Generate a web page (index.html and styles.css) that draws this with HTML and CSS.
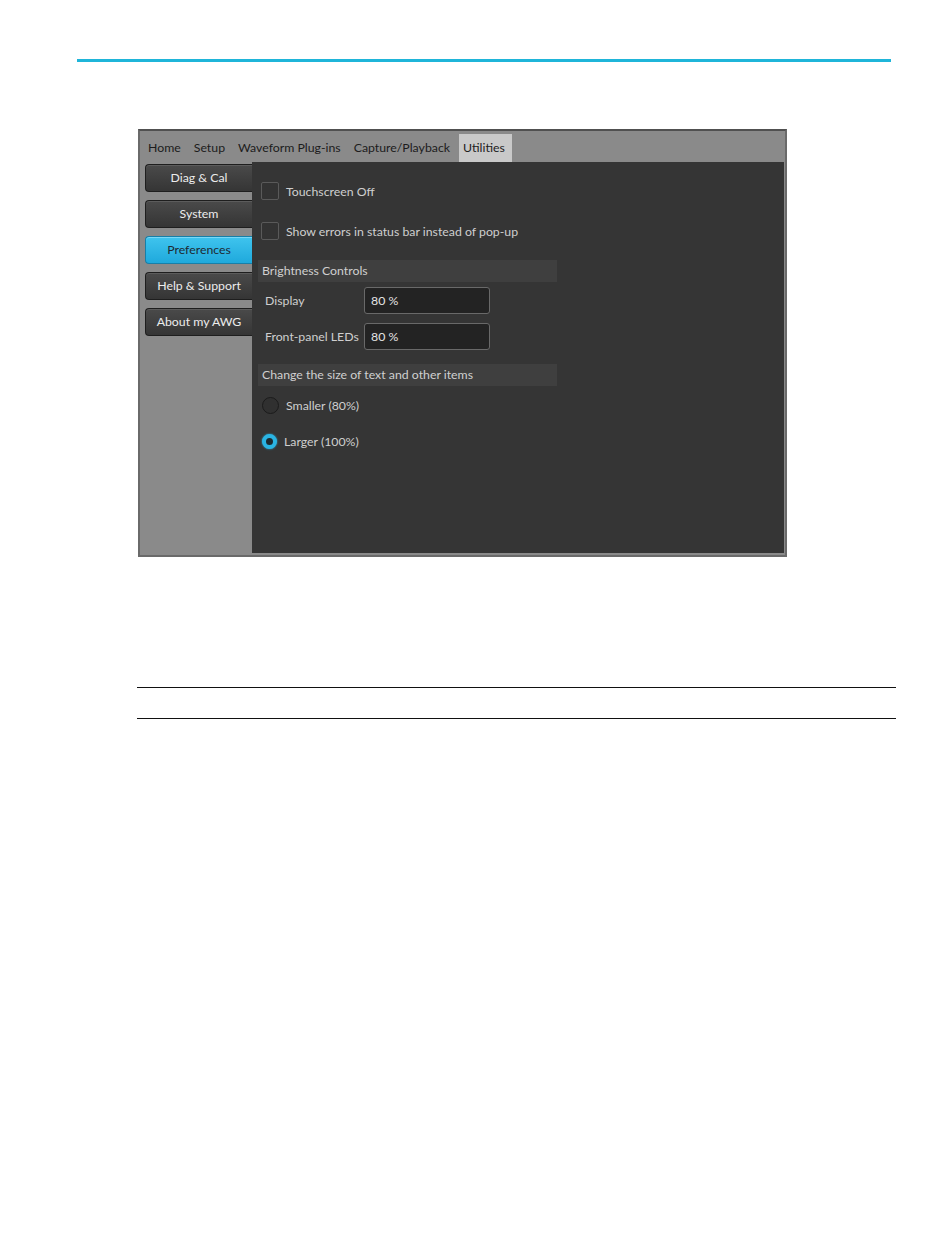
FILE: index.html
```html
<!DOCTYPE html>
<html lang="en">
<head>
    <meta charset="UTF-8">
    <title>Utilities - Preferences</title>
    <link rel="stylesheet" href="styles.css">
</head>
<body>

<div class="top-rule"></div>

<!-- Screenshot of the instrument UI -->
<div class="screen">
    <div class="tabbar">
        <span class="tab">Home</span>
        <span class="tab">Setup</span>
        <span class="tab">Waveform Plug-ins</span>
        <span class="tab">Capture/Playback</span>
        <span class="tab active">Utilities</span>
    </div>

    <div class="screen-body">
        <div class="sidebar">
            <div class="side-btn">Diag &amp; Cal</div>
            <div class="side-btn">System</div>
            <div class="side-btn selected">Preferences</div>
            <div class="side-btn">Help &amp; Support</div>
            <div class="side-btn">About my AWG</div>
        </div>

        <div class="content">
            <div class="check-row first">
                <span class="checkbox"></span>
                <span>Touchscreen Off</span>
            </div>
            <div class="check-row">
                <span class="checkbox"></span>
                <span>Show errors in status bar instead of pop-up</span>
            </div>

            <div class="group-title">Brightness Controls</div>
            <div class="field-row">
                <span class="field-label">Display</span>
                <span class="field-input">80 %</span>
            </div>
            <div class="field-row">
                <span class="field-label">Front-panel LEDs</span>
                <span class="field-input">80 %</span>
            </div>

            <div class="group-title second">Change the size of text and other items</div>
            <div class="radio-row first">
                <span class="radio"></span>
                <span>Smaller (80%)</span>
            </div>
            <div class="radio-row">
                <span class="radio on"></span>
                <span>Larger (100%)</span>
            </div>
        </div>
    </div>
</div>

<!-- Empty table rule (note box) -->
<div class="note-rule"></div>
<div class="note-rule bottom"></div>

</body>
</html>
```

FILE: styles.css
```css
/* General */
body {
    margin: 0;
    background-color: #fff;
    font-family: Lato, "Open Sans", sans-serif;
}

.top-rule {
    margin: 59px 0 0 77px;
    width: 814px;
    height: 3px;
    background-color: #1fb5d9;
}

/* Screenshot frame */
.screen {
    margin: 67px 0 0 138px;
    width: 645px;
    height: 424px;
    border: 2px solid #6a6a6a;
    border-top-color: #505050;
    background-color: #8a8a8a;
    display: flex;
    flex-direction: column;
}

/* Tabs */
.tabbar {
    height: 30px;
    margin-top: 1px;
    display: flex;
    align-items: flex-end;
    padding-left: 4px;
}

.tab {
    height: 28px;
    line-height: 27px;
    padding: 0 4px;
    margin-right: 5px;
    font-size: 12.3px;
    color: #1c1c1c;
    white-space: nowrap;
}

.tab.active {
    background-color: #c9c9c9;
    margin-right: 0;
    padding-right: 7px;
}

.screen-body {
    flex: 1;
    display: flex;
    margin: 0 1px 2px 1px;
}

/* Left navigation */
.sidebar {
    width: 107px;
    padding: 2px 0 0 4px;
    display: flex;
    flex-direction: column;
    gap: 8px;
}

.side-btn {
    height: 26px;
    line-height: 26px;
    text-align: center;
    font-size: 12.3px;
    color: #ececec;
    background: linear-gradient(#4a4a4a, #353535);
    border: 1px solid #1e1e1e;
    border-right: none;
    border-radius: 4px 0 0 4px;
    box-shadow: inset 0 1px 0 #5c5c5c;
    white-space: nowrap;
}

.side-btn.selected {
    color: #1e2a33;
    background: linear-gradient(#3fc4ee, #1fa9dc);
    border-color: #177fa8;
    box-shadow: inset 0 1px 0 #7ad8f6;
}

/* Preferences panel */
.content {
    flex: 1;
    background-color: #353535;
    padding-left: 6px;
    font-size: 12.3px;
    color: #cfcfcf;
}

.check-row {
    display: flex;
    align-items: center;
    gap: 7px;
    height: 18px;
    margin: 22px 0 0 3px;
}

.check-row.first {
    margin-top: 20px;
}

.checkbox {
    width: 16px;
    height: 16px;
    border: 1px solid #5a5a5a;
    border-radius: 2px;
    background-color: #333;
}

.group-title {
    width: 295px;
    height: 22px;
    line-height: 22px;
    padding-left: 4px;
    margin-top: 20px;
    background-color: #3f3f3f;
    color: #d0d0d0;
}

.group-title.second {
    margin-top: 14px;
}

.field-row {
    display: flex;
    align-items: center;
    margin-top: 5px;
    padding-left: 7px;
    white-space: nowrap;
}

.field-row + .field-row {
    margin-top: 9px;
}

.field-label {
    width: 99px;
}

.field-input {
    width: 118px;
    height: 25px;
    line-height: 25px;
    padding-left: 6px;
    background-color: #232323;
    border: 1px solid #696969;
    border-radius: 3px;
    color: #e4e4e4;
}

.radio-row {
    display: flex;
    align-items: center;
    gap: 7px;
    height: 18px;
    margin: 18px 0 0 3px;
}

.radio-row.first {
    margin-top: 10px;
}

.radio {
    width: 15px;
    height: 15px;
    border: 1px solid #1b1b1b;
    border-radius: 50%;
    background-color: #303030;
    margin-left: 1px;
}

.radio.on {
    width: 7px;
    height: 7px;
    border: 4px solid #2ab4e3;
    background-color: #1d2a30;
    box-shadow: 0 0 2px #2ab4e3;
}

/* Note box rules */
.note-rule {
    margin: 130px 0 0 137px;
    width: 759px;
    height: 1px;
    background-color: #111;
}

.note-rule.bottom {
    margin-top: 30px;
}
```
